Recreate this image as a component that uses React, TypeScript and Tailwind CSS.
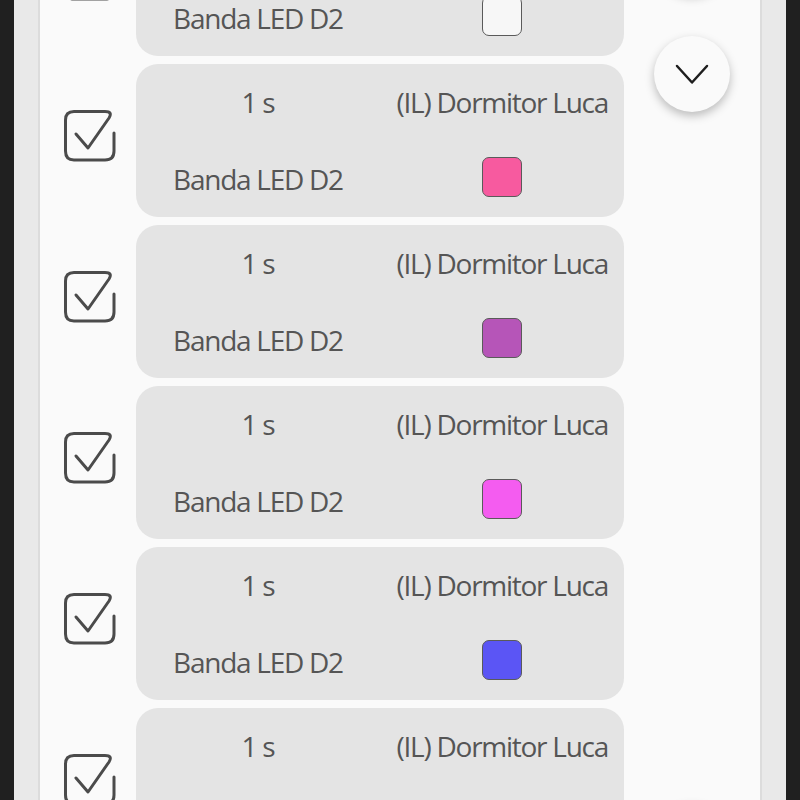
const ROWS = [
  { color: "#f7f7f7" },
  { color: "#f75a9f" },
  { color: "#b655b8" },
  { color: "#f45cf0" },
  { color: "#5b55f5" },
  { color: "#e4e4e4" },
]

function CheckIcon() {
  return (
    <svg width="52" height="52" viewBox="0 0 52 52" fill="none">
      <path
        d="M50 23 V41 Q50 50 41 50 H10 Q1.5 50 1.5 41 V10 Q1.5 1.5 10 1.5 H41 Q49 1.5 45 8 L24 38 L12 24"
        stroke="#4b4b4b"
        strokeWidth="3"
        strokeLinecap="round"
        strokeLinejoin="round"
      />
    </svg>
  )
}

function Row({ color }: { color: string }) {
  return (
    <div className="flex items-center">
      <div className="w-[96px] flex justify-center items-center pl-[3px] -mt-[10px]">
        <CheckIcon />
      </div>
      <div className="w-[488px] h-[153px] rounded-[22px] bg-[#e4e4e4] pt-[19px] flex flex-col text-[28px] leading-[38px] text-[#555] tracking-[-0.045em]">
        <div className="grid grid-cols-2">
          <div className="text-center">1 s</div>
          <div className="text-right pr-[16px]">(IL) Dormitor Luca</div>
        </div>
        <div className="grid grid-cols-2 mt-[35px] items-center">
          <div className="text-center pt-[4px]">Banda LED D2</div>
          <div className="flex justify-center">
            <div className="w-[40px] h-[40px] rounded-[7px] border-[1.5px] border-[#5a5a5a]" style={{ backgroundColor: color }} />
          </div>
        </div>
      </div>
    </div>
  )
}

export default function App() {
  return (
    <div className="h-[800px] bg-[#202020] px-[14px] flex overflow-hidden" style={{ fontFamily: '"Open Sans", sans-serif' }}>
      <div className="flex-1 bg-[#e9e9e9] px-[24px] flex">
        <div className="flex-1 bg-[#fafafa] border-x-2 border-[#dcdcdc] flex overflow-hidden">
          <div className="flex flex-col gap-[8px] -mt-[97px]">
            {ROWS.map((r, i) => (
              <Row key={i} color={r.color} />
            ))}
          </div>
          <div className="flex-1 flex flex-col items-center">
            <div className="w-[76px] h-[76px] shrink-0 rounded-full bg-[#fafafa] -mt-[82px] shadow-[0_4px_10px_rgba(0,0,0,0.22)]" />
            <div className="w-[76px] h-[76px] shrink-0 rounded-full bg-[#fafafa] mt-[42px] shadow-[0_4px_10px_rgba(0,0,0,0.25)]">
              <svg width="76" height="76" viewBox="0 0 76 76" fill="none">
                <path d="M23 30 L38 46.5 L53 30" stroke="#1e1e1e" strokeWidth="2.5" strokeLinecap="round" strokeLinejoin="round" />
              </svg>
            </div>
            <div className="w-[76px] h-[76px] shrink-0 rounded-full bg-[#fafafa] mt-auto -mb-[78px] shadow-[0_4px_10px_rgba(0,0,0,0.22)]" />
          </div>
        </div>
      </div>
    </div>
  )
}
